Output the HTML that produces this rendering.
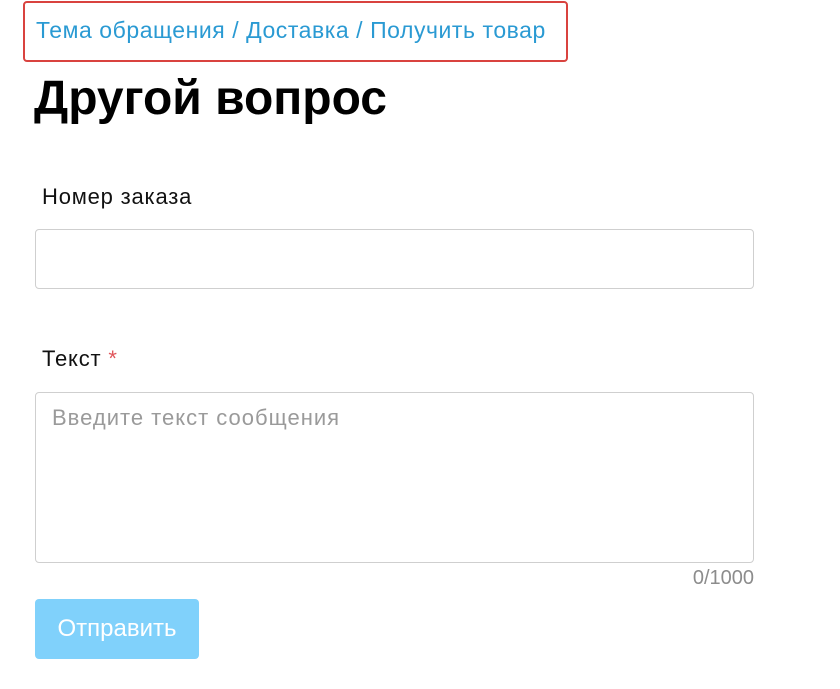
<!DOCTYPE html>
<html><head><meta charset="utf-8"><style>
body{margin:0;width:840px;height:689px;background:#fff;font-family:"Liberation Sans",Arial,sans-serif;position:relative;overflow:hidden}
.a{position:absolute}
#bc{left:23px;top:1px;width:541px;height:57px;border:2px solid #d9433f;border-radius:4px}
#bct{left:36px;top:17px;font-size:23px;letter-spacing:0.55px;color:#2a9ad3;white-space:nowrap}
#h{left:34px;top:71px;font-size:48px;font-weight:bold;color:#000;white-space:nowrap}
.l{font-size:22px;letter-spacing:0.8px;color:#111;white-space:nowrap}
.box{border:1px solid #cfcfcf;border-radius:4px;background:#fff;box-sizing:border-box}
</style></head><body>
<div class="a" id="bc"></div>
<div class="a" id="bct">Тема обращения / Доставка / Получить товар</div>
<div class="a" id="h">Другой вопрос</div>
<div class="a l" style="left:42px;top:184px">Номер заказа</div>
<div class="a box" style="left:35px;top:229px;width:719px;height:60px"></div>
<div class="a l" style="left:42px;top:346px">Текст <span style="color:#e0555a">*</span></div>
<div class="a box" style="left:35px;top:392px;width:719px;height:171px"></div>
<div class="a" style="left:52px;top:405px;font-size:22px;letter-spacing:1px;color:#9a9a9a;white-space:nowrap">Введите текст сообщения</div>
<div class="a" style="right:86px;top:567px;font-size:20px;color:#8c8c8c">0/1000</div>
<div class="a" style="left:35px;top:599px;width:164px;height:60px;background:#80d1fb;border-radius:4px;color:#fff;font-size:24px;line-height:60px;text-align:center">Отправить</div>
</body></html>
